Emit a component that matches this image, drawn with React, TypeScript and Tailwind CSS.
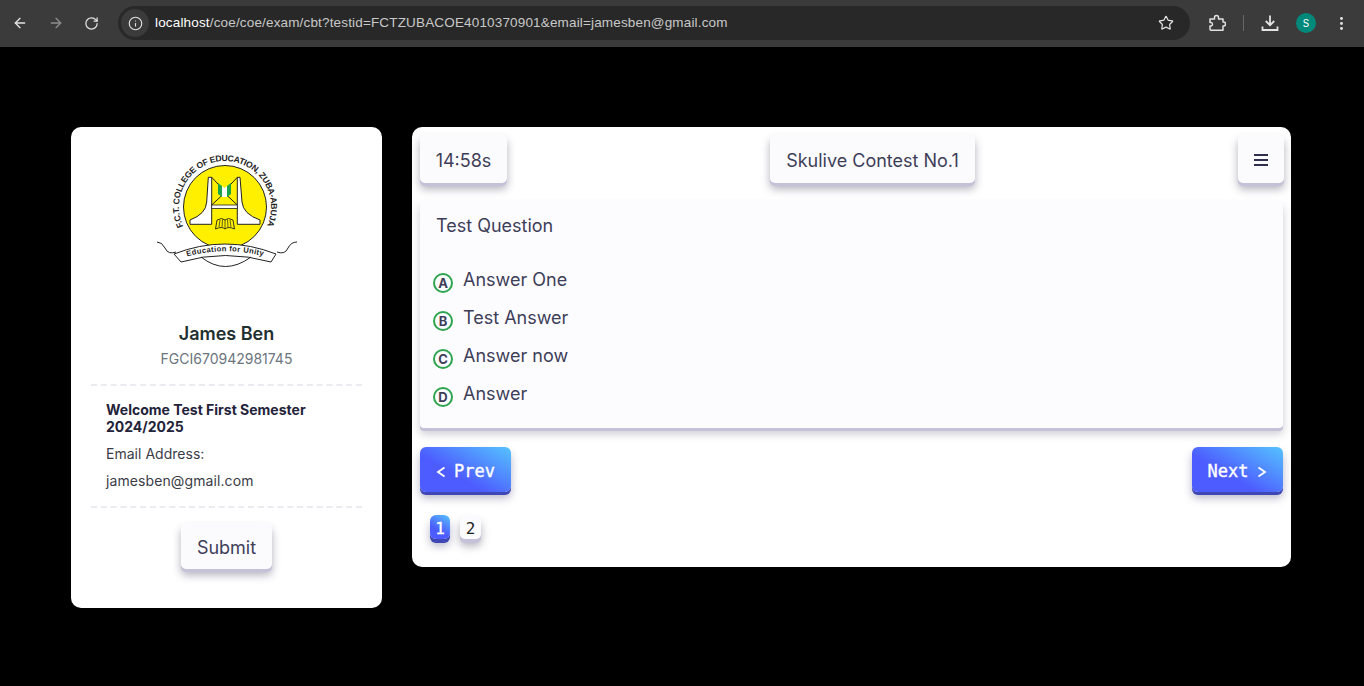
import { ArrowLeft, ArrowRight, RotateCw, Info, Star, EllipsisVertical } from "lucide-react";

const softBtn =
  "bg-[#fbfbfe] rounded-[5px] shadow-[0_3px_0_0_#c4c1d8,0_6px_9px_rgba(50,50,80,0.38)] flex items-center justify-center text-[#3e3e58]";
const blueBtn =
  "bg-[linear-gradient(30deg,#4d5cff_38%,#55c3ff_100%)] rounded-[6px] shadow-[0_3px_0_0_#3f47b5,0_6px_9px_rgba(50,50,110,0.35)] flex items-center text-white font-['DejaVu_Sans_Mono',monospace] [-webkit-text-stroke:0.35px_white] text-[17px]";

function Logo() {
  return (
    <svg width="143" height="118" viewBox="0 0 143 118" className="block">
      <defs>
        <path id="ringText" d="M 28.3 74.4 A 46 46 0 1 1 111.7 74.4" fill="none" />
        <path id="ribbonText" d="M 32 104.5 Q 70 94 110 104.5" fill="none" />
      </defs>
      <circle cx="70" cy="55" r="41.5" fill="#fff000" stroke="#222" strokeWidth="1" />
      <text fontSize="8.6" fontFamily="Liberation Sans, sans-serif" fontWeight="700" fill="#222" textLength="183">
        <textPath href="#ringText" textLength="183">F.C.T. COLLEGE OF EDUCATION, ZUBA-ABUJA</textPath>
      </text>
      <path d="M53.3 25.3 L56.7 25.3 L56.7 72.3 L35 72.3 L35 68 Q51 62 51.7 50 Z" fill="#fff" stroke="#222" strokeWidth="1" />
      <path d="M85 25.3 L82.3 25.3 L82.3 72.3 L105 72.3 L105 68 Q88 62 87 50 Z" fill="#fff" stroke="#222" strokeWidth="1" />
      <path d="M56.7 25.3 L69.5 39 L82.3 25.3 M56.7 53 L69.5 41 L82.3 53" fill="none" stroke="#222" strokeWidth="1" />
      <rect x="56.7" y="53" width="25.6" height="3.5" fill="#fff" stroke="#222" strokeWidth="0.8" />
      <path d="M63 31 L67 34 L67 45 L63 42 Z M76 31 L72 34 L72 45 L76 42 Z" fill="#1aa34a" />
      <path d="M67 34 L69.5 36 L72 34 L72 45 L67 45 Z" fill="#fff" />
      <path d="M60.5 77 L62 68 Q67 65 70 68 Q73 65 78 68 L79.5 77 Q73 74 70 77 Q67 74 60.5 77 Z" fill="#fff000" stroke="#222" strokeWidth="0.9" />
      <path d="M65 68 L64 75 M67.5 67.5 L67 75 M72.5 67.5 L73 75 M75 68 L76 75 M70 68 L70 77" stroke="#222" strokeWidth="0.7" />
      <path d="M2 90 Q7 90 10 96 Q13 103 21 100 M142 90 Q136 90 133 96 Q130 103 122 100" fill="none" stroke="#222" strokeWidth="1" />
      <path d="M19 102 Q70 82 121 102 L116 110 Q70 97 26 110 Z" fill="#fff" stroke="#222" strokeWidth="1" />
      <path d="M46 105 Q70 124 96 105" fill="none" stroke="#222" strokeWidth="1" />
      <text fontSize="7.6" fontFamily="Liberation Sans, sans-serif" fontWeight="700" fill="#222" textLength="77">
        <textPath href="#ribbonText" textLength="77">Education for Unity</textPath>
      </text>
    </svg>
  );
}

function Option({ letter, text }: { letter: string; text: string }) {
  return (
    <div className="flex items-start h-[38px]">
      <span className="mt-[7px] w-[20px] h-[20px] rounded-full border-2 border-[#2ea44f] flex items-center justify-center text-[13px] font-bold text-[#3e3e58] leading-none">
        {letter}
      </span>
      <span className="ml-[10px] text-[18px] leading-[28px] text-[#3e3e58]">{text}</span>
    </div>
  );
}

function Chevron({ dir }: { dir: "l" | "r" }) {
  return (
    <svg width="10" height="12" viewBox="0 0 10 12" fill="none" stroke="currentColor" strokeWidth="1.8">
      <path d={dir === "l" ? "M8.5 1.5 L2 6 L8.5 10.5" : "M1.5 1.5 L8 6 L1.5 10.5"} />
    </svg>
  );
}

export default function App() {
  return (
    <div className="h-[686px] w-[1364px] overflow-hidden bg-black flex flex-col font-['Inter',sans-serif]">
      <header className="h-[47px] bg-[#3b3b3b] flex items-center text-[#e3e3e3] pb-[1px]">
        <div className="w-[118px] flex items-center shrink-0">
          <ArrowLeft size={16} strokeWidth={2} className="ml-[12px]" />
          <ArrowRight size={16} strokeWidth={2} className="ml-[20px] text-[#8e8e8e]" />
          <RotateCw size={15} strokeWidth={2} className="ml-[20px]" />
        </div>
        <div className="w-[1072px] h-[34px] rounded-full bg-[#282828] flex items-center shrink-0">
          <span className="w-[28px] h-[28px] ml-[3px] rounded-full bg-[#3b3b3b] flex items-center justify-center">
            <Info size={15} strokeWidth={1.8} />
          </span>
          <span className="ml-[6px] text-[13.5px] text-[#c8c8c8] font-['Liberation_Sans',sans-serif] tracking-[0.16px]">
            <span className="text-white">localhost</span>/coe/coe/exam/cbt?testid=FCTZUBACOE4010370901&amp;email=jamesben@gmail.com
          </span>
          <Star size={16} strokeWidth={1.8} className="ml-auto mr-[16px]" />
        </div>
        <svg width="18" height="18" viewBox="0 0 18 18" fill="none" stroke="currentColor" strokeWidth="1.5" strokeLinejoin="round" className="ml-[18px]">
          <path d="M2 5 H6.5 V3.5 A1.8 1.8 0 0 1 10.5 3.5 V5 H15 V8 H15.5 A1.9 1.9 0 0 1 15.5 12 H15 V16.2 H3 Q2 16.2 2 15 V12 H3.2 A1.9 1.9 0 0 0 3.2 8.4 H2 Z" />
        </svg>
        <span className="ml-[17px] w-[1px] h-[16px] bg-[#666]" />
        <svg width="18" height="18" viewBox="0 0 18 18" fill="none" stroke="currentColor" strokeWidth="1.8" className="ml-[17px]">
          <path d="M9 1.5 V11 M4.8 7 L9 11.2 L13.2 7 M1.5 12.5 V16 H16.5 V12.5" />
        </svg>
        <span className="ml-[17px] w-[20px] h-[20px] rounded-full bg-[#00897b] text-white text-[10px] flex items-center justify-center">
          S
        </span>
        <EllipsisVertical size={17} strokeWidth={2.2} className="ml-[17px]" />
      </header>

      <main className="flex items-start gap-[30px] pl-[71px] pt-[80px]">
        <aside className="w-[311px] h-[481px] bg-white rounded-[10px] flex flex-col items-center pt-[25px] px-[20px]">
          <Logo />
          <h2 className="mt-[52px] text-[18px] leading-[24px] font-semibold text-[#1f2f30]">James Ben</h2>
          <p className="mt-[3px] text-[14px] leading-[20px] text-[#6c757d]">FGCI670942981745</p>
          <div className="w-full mt-[15px] border-t-2 border-dashed border-[#ebebf2] pt-[15px] pb-[17px] px-[15px]">
            <p className="text-[14px] leading-[17px] font-bold text-[#23233a]">Welcome Test First Semester 2024/2025</p>
            <p className="mt-[10px] text-[14px] leading-[17px] tracking-[0.02px] text-[#3c3c48]">Email Address:</p>
            <p className="mt-[10px] text-[14px] leading-[17px] tracking-[0.1px] text-[#3c3c48]">jamesben@gmail.com</p>
          </div>
          <div className="w-full border-t-2 border-dashed border-[#ebebf2]" />
          <button className={`${softBtn} mt-[15px] w-[91px] h-[46px] pt-[2px] text-[18px]`}>Submit</button>
        </aside>

        <section className="w-[879px] h-[440px] bg-white rounded-[10px] pt-[7px] px-[8px]">
          <div className="flex items-start justify-between h-[67px]">
            <div className={`${softBtn} w-[87px] h-[49px] pt-[3px] text-[18px]`}>14:58s</div>
            <div className={`${softBtn} w-[205px] h-[49px] pt-[3px] text-[18px]`}>Skulive Contest No.1</div>
            <button className={`${softBtn} w-[46px] h-[49px] pt-[3px] mr-[-1px]`} aria-label="Menu">
              <svg width="14" height="12" viewBox="0 0 14 12" fill="#2f2f4d">
                <rect x="0" y="0" width="14" height="2" />
                <rect x="0" y="5" width="14" height="2" />
                <rect x="0" y="10" width="14" height="2" />
              </svg>
            </button>
          </div>
          <div className="h-[227px] bg-[#fcfcff] rounded-[4px] shadow-[0_3px_0_0_#c4c1d8,0_6px_9px_rgba(50,50,80,0.25)] pt-[11px] px-[14px]">
            <p className="ml-[2px] text-[18px] leading-[28px] text-[#3e3e58]">Test Question</p>
            <div className="mt-[26px] ml-[-1px]">
              <Option letter="A" text="Answer One" />
              <Option letter="B" text="Test Answer" />
              <Option letter="C" text="Answer now" />
              <Option letter="D" text="Answer" />
            </div>
          </div>
          <div className="mt-[19px] flex justify-between">
            <button className={`${blueBtn} w-[91px] h-[45px] pt-[4px] justify-center gap-[8px]`}>
              <Chevron dir="l" />
              Prev
            </button>
            <button className={`${blueBtn} w-[91px] h-[45px] pt-[4px] justify-center gap-[9px]`}>
              Next
              <Chevron dir="r" />
            </button>
          </div>
          <div className="mt-[23px] ml-[10px] flex gap-[10px]">
            <button className={`${blueBtn} !shadow-[0_4px_0_0_#3f47b5,0_7px_9px_rgba(50,50,110,0.35)] !text-[16px] w-[20px] h-[24px] pt-[4px] justify-center rounded-[5px]`}>1</button>
            <button className={`${softBtn} !shadow-[0_4px_0_0_#c4c1d8,0_7px_9px_rgba(50,50,80,0.38)] w-[21px] h-[24px] pt-[4px] !text-[#222] font-['DejaVu_Sans_Mono',monospace] text-[16px]`}>2</button>
          </div>
        </section>
      </main>
    </div>
  );
}
